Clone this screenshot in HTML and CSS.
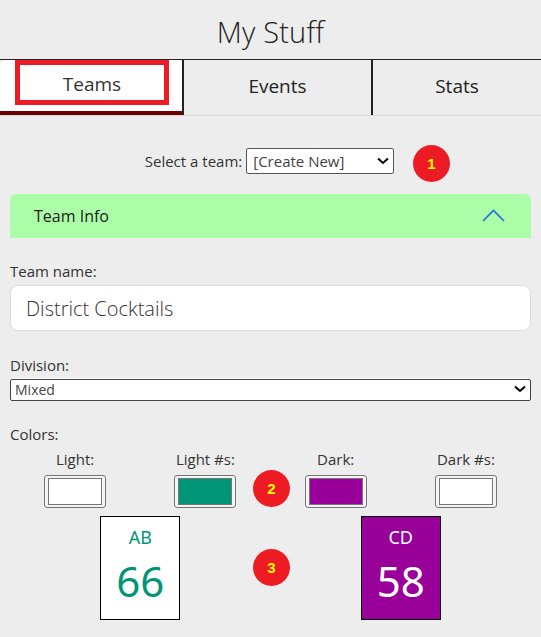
FILE: index.html
```html
<!DOCTYPE html>
<html lang="en">
<head>
<meta charset="utf-8">
<title>My Stuff</title>
<link rel="stylesheet" href="styles.css">
</head>
<body>
<header class="top">
  <h1 class="title">My Stuff</h1>
</header>
<nav class="tabs">
  <div class="tab tab-teams"><span class="tab-highlight">Teams</span></div>
  <div class="tab tab-events">Events</div>
  <div class="tab tab-stats">Stats</div>
</nav>
<main class="content">
  <div class="team-select-row">
    <label class="inline-label" for="team">Select a team:</label>
    <div class="select-wrap small">
      <select id="team" class="select"><option>[Create New]</option></select>
      <svg class="select-arrow" width="12" height="8" viewBox="0 0 12 8"><path d="M1 1.5 L6 6 L11 1.5" fill="none" stroke="#000" stroke-width="2"/></svg>
    </div>
  </div>

  <section class="panel">
    <div class="panel-head">
      <span>Team Info</span>
      <svg class="chevron" width="23" height="13" viewBox="0 0 23 13"><path d="M1 12 L11.5 1.5 L22 12" fill="none" stroke="#1f6fe0" stroke-width="1.6"/></svg>
    </div>
  </section>

  <div class="field">
    <label class="label" for="tname">Team name:</label>
    <input id="tname" class="text-input" type="text" value="District Cocktails">
  </div>

  <div class="field division">
    <label class="label" for="div">Division:</label>
    <div class="select-wrap wide">
      <select id="div" class="select"><option>Mixed</option></select>
      <svg class="select-arrow" width="12" height="8" viewBox="0 0 12 8"><path d="M1 1.5 L6 6 L11 1.5" fill="none" stroke="#000" stroke-width="2"/></svg>
    </div>
  </div>

  <div class="field colors">
    <span class="label">Colors:</span>
    <div class="color-grid">
      <div class="color-cell"><span>Light:</span><input class="swatch" type="color" value="#ffffff"></div>
      <div class="color-cell"><span>Light #s:</span><input class="swatch" type="color" value="#009577"></div>
      <div class="color-cell"><span>Dark:</span><input class="swatch" type="color" value="#990099"></div>
      <div class="color-cell"><span>Dark #s:</span><input class="swatch" type="color" value="#ffffff"></div>
    </div>
  </div>

  <div class="cards">
    <div class="card-cell">
      <div class="card card-light"><span class="card-abbr">AB</span><span class="card-num">66</span></div>
    </div>
    <div class="card-cell">
      <div class="card card-dark"><span class="card-abbr">CD</span><span class="card-num">58</span></div>
    </div>
  </div>

  <span class="badge badge-1">1</span>
  <span class="badge badge-2">2</span>
  <span class="badge badge-3">3</span>
</main>
</body>
</html>
```

FILE: styles.css
```css
* { box-sizing: border-box; }

html, body {
  margin: 0;
  padding: 0;
  background: #ededed;
}

body {
  font-family: "Open Sans", "Noto Sans", sans-serif;
  color: #333;
  width: 541px;
  height: 637px;
  overflow: hidden;
}

.top {
  height: 60px;
  border-bottom: 1px solid #222;
  display: flex;
  align-items: center;
  justify-content: center;
}

.title {
  margin: 4px 0 0;
  font-size: 29px;
  font-weight: 300;
  color: #222;
  letter-spacing: 0.2px;
}

.tabs {
  display: flex;
  height: 56px;
  border-bottom: 1px solid #d6d6d6;
}

.tab {
  display: flex;
  align-items: center;
  justify-content: center;
  font-size: 19px;
  color: #222;
  padding-bottom: 4px;
}

.tab-teams {
  width: 182px;
  background: #fff;
  border-radius: 5px 5px 0 0;
  border-bottom: 4px solid #6b0000;
  align-items: flex-start;
  justify-content: flex-start;
  padding: 0 0 0 15px;
}

.tab-highlight {
  width: 154px;
  height: 45px;
  border: 5px solid #ed1c24;
  display: flex;
  align-items: center;
  justify-content: center;
  color: #333;
  padding-top: 3px;
}

.tab-events {
  width: 189px;
  border-left: 2px solid #222;
}

.tab-stats {
  flex: 1;
  border-left: 2px solid #222;
}

.content {
  position: relative;
  padding: 32px 10px 0;
}

.team-select-row {
  display: flex;
  justify-content: center;
  align-items: center;
  gap: 4px;
  padding-right: 2px;
}

.inline-label {
  font-size: 15px;
}

.select-wrap {
  position: relative;
  background: #fff;
}

.select-wrap.small {
  width: 148px;
  height: 26px;
}

.select-wrap.wide {
  width: 100%;
  height: 22px;
}

.select {
  appearance: none;
  -webkit-appearance: none;
  width: 100%;
  height: 100%;
  margin: 0;
  border: 1px solid #555;
  border-radius: 2px;
  background: #fff;
  font-family: inherit;
  font-size: 15px;
  color: #444;
  padding: 0 20px 0 6px;
}

.select-wrap.wide .select {
  font-size: 14px;
  padding-left: 4px;
  border-color: #444;
}

.select-arrow {
  position: absolute;
  right: 5px;
  top: 50%;
  margin-top: -4px;
  pointer-events: none;
}

.panel {
  margin-top: 20px;
}

.panel-head {
  height: 44px;
  background: #abfda8;
  border-radius: 6px 6px 0 0;
  display: flex;
  align-items: center;
  justify-content: space-between;
  padding: 0 26px 0 24px;
  font-size: 16px;
  color: #222;
}

.chevron {
  margin-top: -1px;
}

.field {
  display: flex;
  flex-direction: column;
}

.label {
  font-size: 15px;
  line-height: 20px;
}

.panel + .field {
  margin-top: 23px;
}

.text-input {
  margin-top: 4px;
  height: 46px;
  border: 1px solid #dcdcdc;
  border-radius: 8px;
  background: #fff;
  padding: 0 15px;
  font-family: inherit;
  font-size: 20px;
  font-weight: 300;
  color: #333;
}

.division {
  margin-top: 24px;
}

.division .select-wrap {
  margin-top: 3px;
}

.colors {
  margin-top: 24px;
}

.color-grid {
  display: grid;
  grid-template-columns: repeat(4, 1fr);
  margin-top: 5px;
}

.color-cell {
  display: flex;
  flex-direction: column;
  align-items: center;
  font-size: 15px;
  line-height: 20px;
}

.swatch {
  margin-top: 6px;
  width: 62px;
  height: 33px;
  padding: 2px 3px;
  border: 1px solid #767676;
  border-radius: 3px;
  background: #f4f4f4;
  cursor: pointer;
}

.swatch::-webkit-color-swatch-wrapper { padding: 0; }
.swatch::-webkit-color-swatch { border: 1px solid #777; border-radius: 0; }

.cards {
  display: grid;
  grid-template-columns: 1fr 1fr;
  margin-top: 8px;
}

.card-cell {
  display: flex;
  justify-content: center;
}

.card {
  width: 80px;
  height: 104px;
  border: 1px solid #000;
  display: flex;
  flex-direction: column;
  align-items: center;
  font-family: "Noto Sans", "Open Sans", sans-serif;
}

.card-light { background: #fff; color: #009577; }
.card-dark { background: #990099; color: #fff; }

.card-abbr {
  margin-top: 8px;
  font-size: 18px;
  line-height: 24px;
}

.card-num {
  margin-top: 8px;
  font-size: 42px;
  line-height: 48px;
}

.badge {
  position: absolute;
  width: 37px;
  height: 37px;
  border-radius: 50%;
  background: #ed1c24;
  color: #ffff00;
  font-family: "Liberation Sans", Arial, sans-serif;
  font-weight: bold;
  font-size: 15px;
  display: flex;
  align-items: center;
  justify-content: center;
}

.badge-1 { left: 413px; top: 29px; }
.badge-2 { left: 253px; top: 354px; }
.badge-3 { left: 253px; top: 433px; }
```
